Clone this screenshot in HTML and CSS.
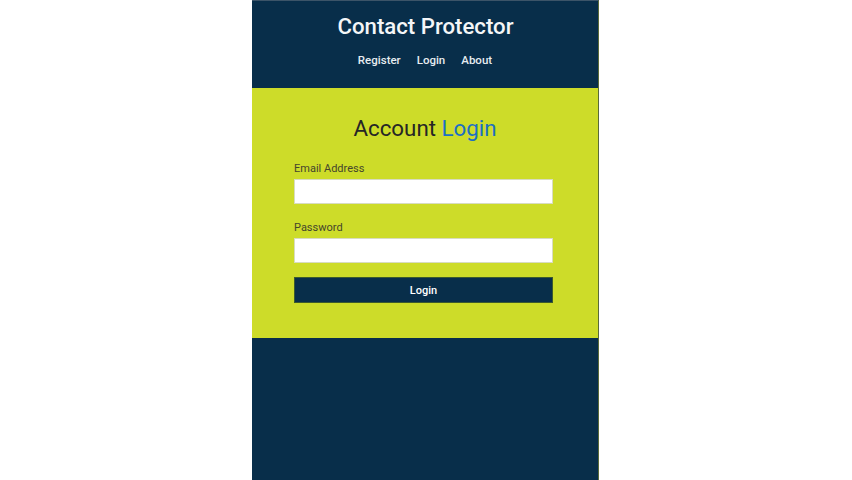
FILE: index.html
```html
<!DOCTYPE html>
<html>
<head>
<meta charset="utf-8">
<link rel="stylesheet" href="styles.css">
</head>
<body>
<div class="app">
  <header class="header">
    <h1 class="brand">Contact Protector</h1>
    <nav class="nav">
      <a href="#">Register</a>
      <a href="#">Login</a>
      <a href="#">About</a>
    </nav>
  </header>
  <section class="panel">
    <h2 class="title">Account <span class="accent">Login</span></h2>
    <form class="form">
      <label class="label">Email Address</label>
      <input class="input" type="email">
      <label class="label">Password</label>
      <input class="input input-last" type="password">
      <button class="btn" type="button">Login</button>
    </form>
  </section>
  <div class="rest"></div>
</div>
</body>
</html>
```
FILE: styles.css
```css
html, body {
  margin: 0;
  padding: 0;
  background: #ffffff;
  font-family: Roboto, "Liberation Sans", sans-serif;
}
.app {
  width: 347px;
  margin: 0 0 0 calc(50% - 174px);
  min-height: 480px;
  background: #082e4a;
  border-right: 1px solid #5a6a3a;
  border-top: 1px solid #3c5468;
  box-sizing: border-box;
  display: flex;
  flex-direction: column;
}
.header {
  height: 87px;
  display: flex;
  flex-direction: column;
  align-items: center;
  color: #ffffff;
}
.brand {
  margin: 12px 0 0 1px;
  font-size: 22.2px;
  font-weight: 500;
  line-height: 26px;
  color: #f4f6f8;
}
.nav {
  display: flex;
  gap: 16px;
  margin-top: 14px;
}
.nav a {
  color: #e6ecf0;
  text-decoration: none;
  font-size: 11.5px;
  font-weight: 500;
  line-height: 14px;
}
.panel {
  background: #cddc29;
  height: 250px;
  box-sizing: border-box;
  padding-top: 27px;
  display: flex;
  flex-direction: column;
  align-items: center;
}
.title {
  margin: 0;
  font-size: 22.3px;
  font-weight: 400;
  line-height: 26px;
  color: #262626;
}
.accent {
  color: #1c6fc2;
}
.form {
  width: 259px;
  margin-top: 21px;
  display: flex;
  flex-direction: column;
  margin-right: 3px;
}
.label {
  font-size: 11px;
  line-height: 13px;
  color: #45452c;
  margin-bottom: 4px;
}
.input {
  height: 25px;
  box-sizing: border-box;
  border: 1px solid #d8dcc0;
  background: #ffffff;
  margin: 0 0 17px 0;
  padding: 0;
}
.input-last {
  margin-bottom: 14px;
}
.btn {
  height: 26px;
  border: 1px solid #3c5a2e;
  background: #082e4a;
  color: #ffffff;
  font-family: Roboto, "Liberation Sans", sans-serif;
  font-size: 11px;
  font-weight: 500;
  padding: 0;
}
.rest {
  flex: 1;
}
```
